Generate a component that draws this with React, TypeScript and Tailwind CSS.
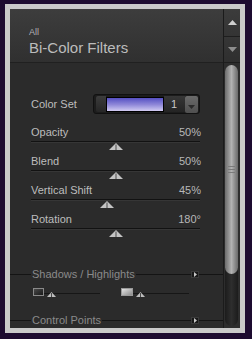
import type { CSSProperties } from 'react';

const sliders = [
  { label: 'Opacity', value: '50%', pos: 50 },
  { label: 'Blend', value: '50%', pos: 50 },
  { label: 'Vertical Shift', value: '45%', pos: 45 },
  { label: 'Rotation', value: '180°', pos: 50 },
];

function Thumb({ className = '', style }: { className?: string; style?: CSSProperties }) {
  return (
    <svg width="14" height="7" viewBox="0 0 14 7" className={className} style={style}>
      <polygon points="7,0 14,7 0,7" fill="#c4c4c4" />
      <line x1="7" y1="1.5" x2="7" y2="7" stroke="#4a4a4a" strokeWidth="1" />
    </svg>
  );
}

function SectionHeader({ title }: { title: string }) {
  return (
    <div className="flex items-center h-[13px]">
      <div className="w-[21px] h-px bg-[#141414]" />
      <span className="pl-[1px] pr-[1px] text-[11px] leading-[13px] text-[#8a8a8a] whitespace-nowrap">{title}</span>
      <div className="flex-1 h-px bg-[#141414]" />
      <div className="w-[8px] h-[7px] bg-[#181818] border border-[#3a3a3a] flex items-center justify-center">
        <svg width="3" height="5" viewBox="0 0 3 5">
          <polygon points="0,0 3,2.5 0,5" fill="#c8c8c8" />
        </svg>
      </div>
      <div className="w-[24px] h-px bg-[#141414]" />
    </div>
  );
}

function MiniTrack({ width, thumb }: { width: string; thumb: string }) {
  return (
    <div className={`relative h-[8px] ${width}`}>
      <div className="absolute left-0 right-0 top-[5px] h-px bg-[#161616]" />
      <svg width="9" height="5" viewBox="0 0 9 5" className={`absolute top-[4px] ${thumb}`}>
        <polygon points="4.5,0 9,5 0,5" fill="#bdbdbd" />
        <line x1="4.5" y1="1" x2="4.5" y2="5" stroke="#4a4a4a" strokeWidth="1" />
      </svg>
    </div>
  );
}

export default function App() {
  return (
    <div className="w-[252px] h-[339px] bg-[#1d0b30] pt-[4px] pl-[5px] pr-[7px] pb-[6px] font-['Liberation_Sans',Arial,sans-serif] overflow-hidden">
      <div className="h-full bg-[#c9c9c9] p-[5px]">
        <div className="flex h-full bg-[#2b2b2b] overflow-hidden">
          {/* main column */}
          <div className="flex-1 min-w-0 flex flex-col overflow-hidden">
            <div className="h-[54px] shrink-0 bg-gradient-to-b from-[#3d3d3d] to-[#303030] border-b border-[#202020] pl-[19px] pt-[18px]">
              <div className="text-[9px] leading-[10px] text-[#b4b4b4]">All</div>
              <div className="mt-[3px] text-[15px] leading-[16px] text-[#bcbcbc] whitespace-nowrap">Bi-Color Filters</div>
            </div>

            <div className="pt-[31px] pl-[21px] pr-[23px]">
              <div className="flex items-center h-[20px]">
                <span className="w-[62px] text-[11px] leading-[13px] text-[#bdbdbd]">Color Set</span>
                <div className="w-[107px] h-[20px] rounded-[3px] bg-[#1c1c1c] border border-[#111] flex items-center pl-[2px] pr-[1px]">
                  <div className="w-[10px] h-[16px] rounded-l-[2px] bg-gradient-to-b from-[#3c3c3c] to-[#262626]" />
                  <div className="w-[58px] h-[15px] border border-black bg-gradient-to-b from-[#564ec2] via-[#8e86d8] to-[#d2cbf1]" />
                  <div className="flex-1 h-[16px] bg-gradient-to-b from-[#363636] to-[#242424] flex items-center pl-[7px]">
                    <span className="text-[11px] leading-[13px] text-[#c8c8c8]">1</span>
                  </div>
                  <div className="w-[13px] h-[17px] rounded-[2px] bg-gradient-to-b from-[#6a6a6a] to-[#505050] flex items-end justify-center pb-[4px]">
                    <svg width="7" height="4" viewBox="0 0 7 4">
                      <polygon points="0,0 7,0 3.5,4" fill="#2a2a2a" />
                    </svg>
                  </div>
                </div>
              </div>

              <div className="mt-[12px]">
                {sliders.map((s) => (
                  <div key={s.label} className="mb-[4px]">
                    <div className="flex justify-between text-[11px] leading-[13px]">
                      <span className="text-[#bdbdbd]">{s.label}</span>
                      <span className="text-[#b8b8b8] -mr-px">{s.value}</span>
                    </div>
                    <div className="mt-[2px] h-px bg-[#121212]" />
                    <div className="h-px bg-[#363636]" />
                    <div className="relative h-[8px]">
                      <Thumb className="absolute top-0 -translate-x-1/2" style={{ left: `${s.pos}%` }} />
                    </div>
                  </div>
                ))}
              </div>
            </div>

            <div className="mt-[26px]">
              <SectionHeader title="Shadows / Highlights" />
              <div className="flex mt-[7px] pl-[23px]">
                <div className="w-[11px] h-[8px] border border-[#8a8a8a] bg-gradient-to-br from-[#4a4a4a] to-[#1a1a1a]" />
                <MiniTrack width="w-[56px]" thumb="left-[3px]" />
                <div className="ml-[21px] w-[12px] h-[8px] border border-[#9a9a9a] bg-gradient-to-br from-[#e4e4e4] to-[#8c8c8c]" />
                <MiniTrack width="w-[56px]" thumb="left-[3px]" />
              </div>
              <div className="mt-[18px]">
                <SectionHeader title="Control Points" />
              </div>
            </div>
          </div>

          {/* scrollbar */}
          <div className="w-[17px] shrink-0 flex flex-col bg-[#2d2d2d] border-l border-[#1b1b1b]">
            <div className="h-[28px] shrink-0 bg-gradient-to-b from-[#3c3c3c] to-[#343434] border-b border-[#1e1e1e] flex items-center justify-center">
              <svg width="9" height="5" viewBox="0 0 9 5">
                <polygon points="4.5,0 9,5 0,5" fill="#cfcfcf" />
              </svg>
            </div>
            <div className="h-[26px] shrink-0 bg-gradient-to-b from-[#363636] to-[#2f2f2f] border-b border-[#1e1e1e] flex items-center justify-center">
              <svg width="9" height="5" viewBox="0 0 9 5">
                <polygon points="0,0 9,0 4.5,5" fill="#8e8e8e" />
              </svg>
            </div>
            <div className="flex-1 pt-[2px] pb-[2px] pl-[1px] pr-[2px]">
              <div className="h-full rounded-full bg-gradient-to-r from-[#1c1c1c] via-[#2e2e2e] to-[#1c1c1c]">
                <div className="h-[209px] rounded-full bg-gradient-to-r from-[#6c6c6c] via-[#b2b2b2] to-[#6a6a6a] flex flex-col items-center justify-center gap-[2px]">
                  <div className="w-[7px] h-px bg-[#7a7a7a]" />
                  <div className="w-[7px] h-px bg-[#7a7a7a]" />
                  <div className="w-[7px] h-px bg-[#7a7a7a]" />
                </div>
              </div>
            </div>
          </div>
        </div>
      </div>
    </div>
  );
}
